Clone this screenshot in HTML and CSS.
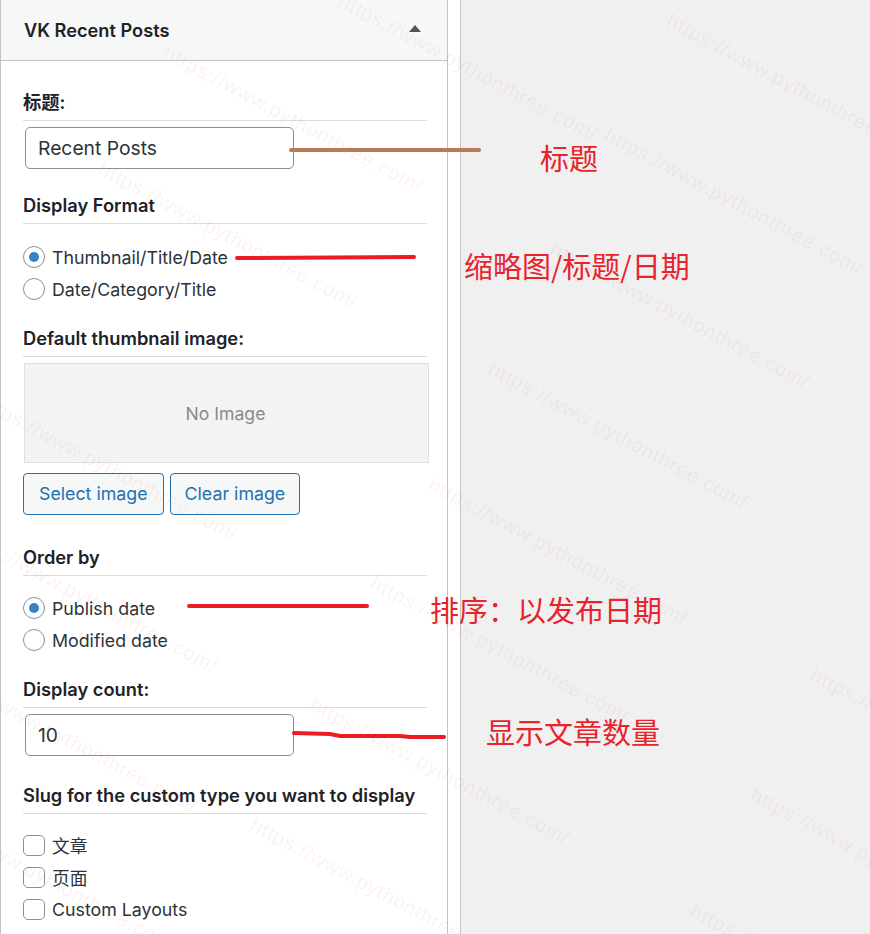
FILE: index.html
```html
<!DOCTYPE html>
<html lang="zh">
<head>
<meta charset="utf-8">
<title>VK Recent Posts</title>
<link rel="stylesheet" href="styles.css">
</head>
<body>
<div class="page">
  <div class="panel">
    <div class="panel-head">
      <h3 class="panel-title">VK Recent Posts</h3>
      <span class="toggle"></span>
    </div>
    <div class="panel-body">
      <div class="field-title t-first">标题:</div>
      <div class="text-input">Recent Posts</div>

      <div class="field-title t-after-input">Display Format</div>
      <div class="choices">
        <label class="choice"><span class="radio checked"></span>Thumbnail/Title/Date</label>
        <label class="choice"><span class="radio"></span>Date/Category/Title</label>
      </div>

      <div class="field-title t-after-list">Default thumbnail image:</div>
      <div class="thumb-box">No Image</div>
      <div class="btn-row">
        <span class="btn">Select image</span>
        <span class="btn">Clear image</span>
      </div>

      <div class="field-title t-after-btn">Order by</div>
      <div class="choices choices-b">
        <label class="choice"><span class="radio checked"></span>Publish date</label>
        <label class="choice"><span class="radio"></span>Modified date</label>
      </div>

      <div class="field-title t-after-list">Display count:</div>
      <div class="text-input">10</div>

      <div class="field-title t-slug">Slug for the custom type you want to display</div>
      <div class="choices choices-c">
        <label class="choice"><span class="checkbox"></span>文章</label>
        <label class="choice"><span class="checkbox"></span>页面</label>
        <label class="choice"><span class="checkbox"></span>Custom Layouts</label>
      </div>
    </div>
  </div>
  <div class="gutter"></div>
  <div class="canvas"></div>

  <div class="watermarks">
    <span class="wm" style="left:165px;top:40px">https://www.pythonthree.com/</span>
    <span class="wm" style="left:340px;top:-12px">https://www.pythonthree.com/</span>
    <span class="wm" style="left:668px;top:8px">https://www.pythonthree.com/</span>
    <span class="wm" style="left:606px;top:122px">https://www.pythonthree.com/</span>
    <span class="wm" style="left:100px;top:156px">https://www.pythonthree.com/</span>
    <span class="wm" style="left:552px;top:236px">https://www.pythonthree.com/</span>
    <span class="wm" style="left:-20px;top:388px">https://www.pythonthree.com/</span>
    <span class="wm" style="left:490px;top:356px">https://www.pythonthree.com/</span>
    <span class="wm" style="left:430px;top:472px">https://www.pythonthree.com/</span>
    <span class="wm" style="left:-40px;top:520px">https://www.pythonthree.com/</span>
    <span class="wm" style="left:372px;top:570px">https://www.pythonthree.com/</span>
    <span class="wm" style="left:-60px;top:660px">https://www.pythonthree.com/</span>
    <span class="wm" style="left:312px;top:692px">https://www.pythonthree.com/</span>
    <span class="wm" style="left:812px;top:662px">https://www.pythonthree.com/</span>
    <span class="wm" style="left:252px;top:812px">https://www.pythonthree.com/</span>
    <span class="wm" style="left:752px;top:782px">https://www.pythonthree.com/</span>
    <span class="wm" style="left:692px;top:898px">https://www.pythonthree.com/</span>
    <span class="wm" style="left:-80px;top:800px">https://www.pythonthree.com/</span>
  </div>

  <svg class="marks" width="870" height="934" viewBox="0 0 870 934">
    <line x1="291" y1="150" x2="479" y2="150" stroke="#b97a57" stroke-width="4" stroke-linecap="round"/>
    <line x1="237" y1="258" x2="414" y2="257" stroke="#ec1c24" stroke-width="4" stroke-linecap="round"/>
    <line x1="189" y1="606" x2="367" y2="606" stroke="#ec1c24" stroke-width="4" stroke-linecap="round"/>
    <polyline points="294,733 330,734 340,736 400,736 410,737 444,737" fill="none" stroke="#ec1c24" stroke-width="4" stroke-linecap="round" stroke-linejoin="round"/>
  </svg>

  <div class="note note-1">标题</div>
  <div class="note note-2">缩略图/标题/日期</div>
  <div class="note note-3">排序：以发布日期</div>
  <div class="note note-4">显示文章数量</div>
</div>
</body>
</html>
```

FILE: styles.css
```css
* { box-sizing: border-box; }
html, body { margin: 0; padding: 0; }
body {
  font-family: Inter, "Noto Sans CJK SC", sans-serif;
  color: #1e1e1e;
  background: #f0f0f1;
  overflow: hidden;
}
.page {
  position: relative;
  display: flex;
  width: 870px;
  height: 934px;
  overflow: hidden;
}
.panel {
  width: 448px;
  flex: none;
  background: #fff;
  border-left: 1px solid #c3c4c7;
  border-right: 1px solid #c3c4c7;
}
.panel-head {
  height: 61px;
  background: #f6f7f7;
  border-bottom: 1px solid #c3c4c7;
  display: flex;
  align-items: center;
  justify-content: space-between;
  padding: 0 26px 0 23px;
}
.panel-title {
  margin: 0;
  font-size: 18.2px;
  font-weight: 600;
  color: #1d2327;
  padding-bottom: 1px;
}
.toggle {
  width: 0; height: 0;
  border-left: 6px solid transparent;
  border-right: 6px solid transparent;
  border-bottom: 7px solid #50575e;
  margin-bottom: 3px;
}
.panel-body {
  padding: 0 20px 0 22px;
}
.field-title {
  font-size: 18.3px;
  font-weight: 600;
  line-height: 20px;
  color: #1d2327;
  padding-bottom: 8px;
  border-bottom: 1px solid #dcdcde;
}
.t-first { margin-top: 31px; }
.t-after-input { margin-top: 26px; }
.t-after-list { margin-top: 23px; }
.t-after-btn { margin-top: 32px; }
.t-slug { margin-top: 29px; }
.text-input {
  margin-top: 6px;
  margin-left: 2px;
  width: 269px;
  height: 42px;
  border: 1px solid #8c8f94;
  border-radius: 5px;
  padding: 0 12px;
  font-size: 19.3px;
  line-height: 40px;
  color: #2c3338;
}
.choices { margin-top: 17px; }
.choices-b { margin-top: 16px; }
.choices-c { margin-top: 15px; }
.choice {
  display: flex;
  align-items: center;
  height: 32px;
  font-size: 17.8px;
  color: #2c3338;
  gap: 7px;
}
.choices-c .choice:nth-child(3) { height: 33px; }
.radio {
  width: 22px; height: 22px;
  border: 1px solid #8c8f94;
  border-radius: 50%;
  display: flex;
  align-items: center;
  justify-content: center;
  flex: none;
}
.radio.checked::after {
  content: "";
  width: 10px; height: 10px;
  border-radius: 50%;
  background: #3582c4;
}
.checkbox {
  width: 22px; height: 21px;
  border: 1px solid #8c8f94;
  border-radius: 5px;
  flex: none;
}
.thumb-box {
  margin-top: 6px;
  margin-left: 1px;
  width: 405px;
  height: 100px;
  background: #f3f3f3;
  border: 1px solid #dfdfdf;
  display: flex;
  align-items: center;
  justify-content: center;
  font-size: 17.6px;
  color: #8a8a8a;
  padding-right: 2px;
}
.btn-row {
  margin-top: 10px;
  display: flex;
  gap: 6px;
}
.btn {
  height: 42px;
  padding: 0 15px;
  border: 1px solid #2271b1;
  border-radius: 4px;
  background: #f6f7f7;
  color: #2271b1;
  font-size: 17.8px;
  line-height: 40px;
}
.btn + .btn { padding: 0 14px; }
.gutter {
  width: 12px;
  flex: none;
  background: #fff;
}
.canvas {
  flex: 1;
  background: #f0f0f1;
  border-left: 1px solid #c3c4c7;
}
.watermarks {
  position: absolute;
  inset: 0;
  pointer-events: none;
}
.wm {
  position: absolute;
  font-family: "Liberation Sans", sans-serif;
  font-size: 20px;
  letter-spacing: 1px;
  color: rgba(235, 60, 60, 0.08);
  white-space: nowrap;
  transform-origin: 0 50%;
  transform: rotate(28deg);
}
.marks {
  position: absolute;
  left: 0; top: 0;
  pointer-events: none;
}
.note {
  position: absolute;
  font-family: "Noto Sans CJK SC", sans-serif;
  font-size: 29px;
  line-height: 36px;
  color: #e8232b;
  white-space: nowrap;
}
.note-1 { left: 540px; top: 139px; }
.note-2 { left: 464px; top: 247px; }
.note-3 { left: 430px; top: 591px; }
.note-4 { left: 486px; top: 713px; }
```
